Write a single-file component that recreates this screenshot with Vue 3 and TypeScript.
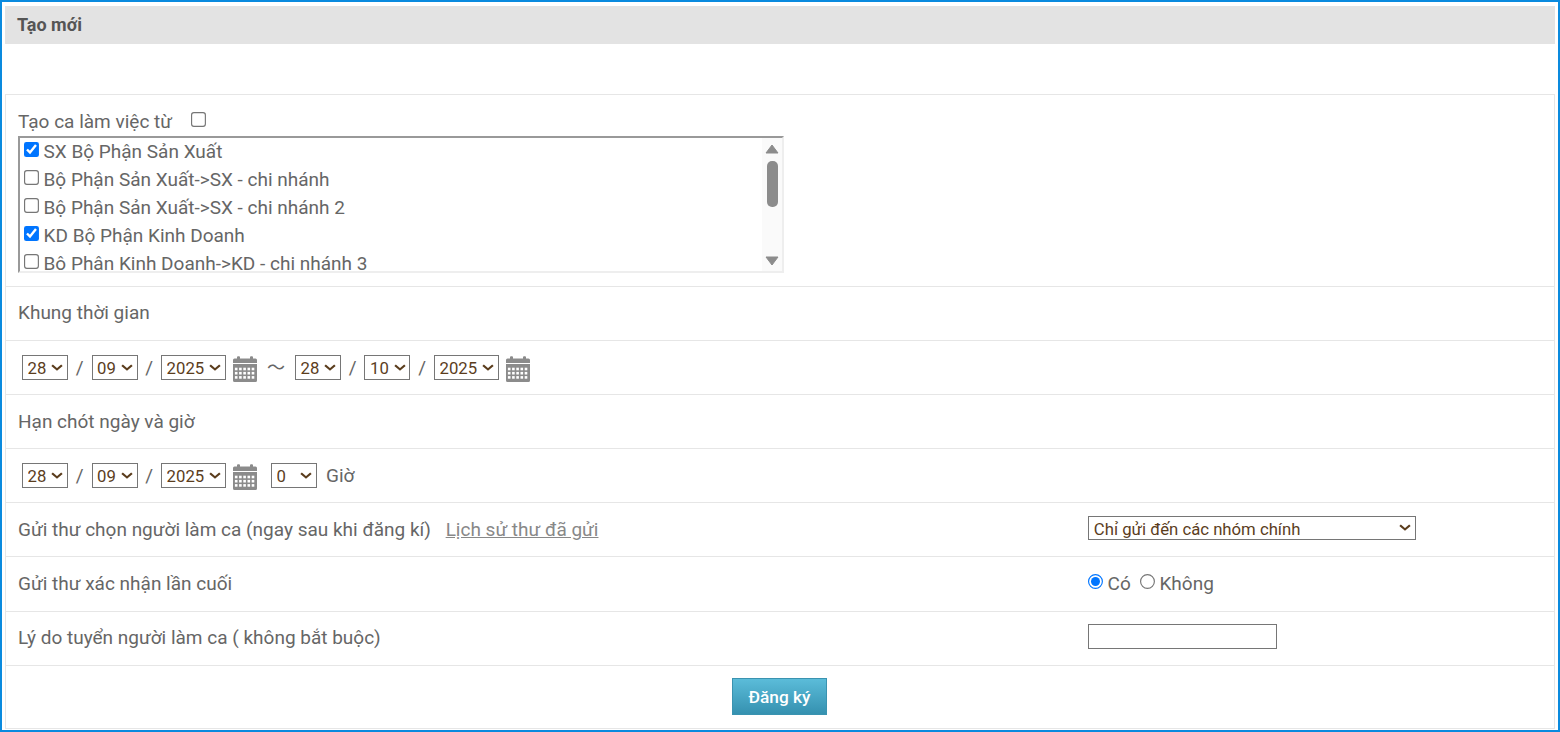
<script setup lang="ts">
interface Option { label: string; checked: boolean }
const departments: Option[] = [
  { label: 'SX Bộ Phận Sản Xuất', checked: true },
  { label: 'Bộ Phận Sản Xuất->SX - chi nhánh', checked: false },
  { label: 'Bộ Phận Sản Xuất->SX - chi nhánh 2', checked: false },
  { label: 'KD Bộ Phận Kinh Doanh', checked: true },
  { label: 'Bộ Phận Kinh Doanh->KD - chi nhánh 3', checked: false },
]
const calendarCells = Array.from({ length: 15 }, (_, i) => ({
  x: 1.9 + (i % 5) * 4.2,
  y: 11.7 + Math.floor(i / 5) * 4.2,
}))
</script>

<template>
  <div class="frame">
    <h2 class="title">Tạo mới</h2>
    <div class="spacer"></div>
    <div class="table">
      <div class="row row-list">
        <div class="from-line">
          <span>Tạo ca làm việc từ</span>
          <input type="checkbox" class="from-check" />
        </div>
        <div class="listbox">
          <div class="list-items">
            <label v-for="d in departments" :key="d.label" class="list-item">
              <input type="checkbox" :checked="d.checked" />
              <span>{{ d.label }}</span>
            </label>
          </div>
          <div class="scrollbar">
            <svg width="14" height="10" viewBox="0 0 14 10"><path d="M7 1 L13 9 H1 Z" fill="#8c8c8c" stroke="#8c8c8c" stroke-linejoin="round" /></svg>
            <div class="thumb"></div>
            <svg class="down" width="14" height="10" viewBox="0 0 14 10"><path d="M7 9 L13 1 H1 Z" fill="#8c8c8c" stroke="#8c8c8c" stroke-linejoin="round" /></svg>
          </div>
        </div>
      </div>

      <div class="row">Khung thời gian</div>

      <div class="row dates">
        <select class="sel"><option>28</option></select>
        <span class="slash">/</span>
        <select class="sel"><option>09</option></select>
        <span class="slash">/</span>
        <select class="sel year"><option>2025</option></select>
        <svg class="cal" width="24" height="26" viewBox="0 0 24 26">
          <path d="M0 4 Q0 2.5 1.5 2.5 H4 V1.2 Q4 .2 5 .2 H6 Q7 .2 7 1.2 V2.5 H17 V1.2 Q17 .2 18 .2 H19 Q20 .2 20 1.2 V2.5 H22.5 Q24 2.5 24 4 V7 H0 Z M0 8 H24 V24.5 Q24 26 22.5 26 H1.5 Q0 26 0 24.5 Z" fill="#8b8b8b" />
          <rect v-for="(c, i) in calendarCells" :key="i" :x="c.x" :y="c.y" width="2.6" height="2.6" fill="#fff" />
        </svg>
        <span class="tilde">～</span>
        <select class="sel"><option>28</option></select>
        <span class="slash">/</span>
        <select class="sel"><option>10</option></select>
        <span class="slash">/</span>
        <select class="sel year"><option>2025</option></select>
        <svg class="cal" width="24" height="26" viewBox="0 0 24 26">
          <path d="M0 4 Q0 2.5 1.5 2.5 H4 V1.2 Q4 .2 5 .2 H6 Q7 .2 7 1.2 V2.5 H17 V1.2 Q17 .2 18 .2 H19 Q20 .2 20 1.2 V2.5 H22.5 Q24 2.5 24 4 V7 H0 Z M0 8 H24 V24.5 Q24 26 22.5 26 H1.5 Q0 26 0 24.5 Z" fill="#8b8b8b" />
          <rect v-for="(c, i) in calendarCells" :key="i" :x="c.x" :y="c.y" width="2.6" height="2.6" fill="#fff" />
        </svg>
      </div>

      <div class="row low">Hạn chót ngày và giờ</div>

      <div class="row dates">
        <select class="sel"><option>28</option></select>
        <span class="slash">/</span>
        <select class="sel"><option>09</option></select>
        <span class="slash">/</span>
        <select class="sel year"><option>2025</option></select>
        <svg class="cal" width="24" height="26" viewBox="0 0 24 26">
          <path d="M0 4 Q0 2.5 1.5 2.5 H4 V1.2 Q4 .2 5 .2 H6 Q7 .2 7 1.2 V2.5 H17 V1.2 Q17 .2 18 .2 H19 Q20 .2 20 1.2 V2.5 H22.5 Q24 2.5 24 4 V7 H0 Z M0 8 H24 V24.5 Q24 26 22.5 26 H1.5 Q0 26 0 24.5 Z" fill="#8b8b8b" />
          <rect v-for="(c, i) in calendarCells" :key="i" :x="c.x" :y="c.y" width="2.6" height="2.6" fill="#fff" />
        </svg>
        <select class="sel hour"><option>0</option></select>
        <span class="hour-label">Giờ</span>
      </div>

      <div class="row split low">
        <div class="left">
          Gửi thư chọn người làm ca (ngay sau khi đăng kí)
          <a class="history" href="#">Lịch sử thư đã gửi</a>
        </div>
        <div class="right">
          <select class="sel wide"><option>Chỉ gửi đến các nhóm chính</option></select>
        </div>
      </div>

      <div class="row split row-55">
        <div class="left">Gửi thư xác nhận lần cuối</div>
        <div class="right radios">
          <input type="radio" name="confirm" checked />
          <span class="radio-text">Có</span>
          <input type="radio" name="confirm" class="radio-2" />
          <span class="radio-text">Không</span>
        </div>
      </div>

      <div class="row split">
        <div class="left">Lý do tuyển người làm ca ( không bắt buộc)</div>
        <div class="right"><input type="text" class="reason" /></div>
      </div>

      <div class="row actions">
        <button type="button" class="submit">Đăng ký</button>
      </div>
    </div>
  </div>
</template>

<style>
html, body { margin: 0; background: #fff; }
</style>

<style scoped>
.frame {
  box-sizing: border-box;
  width: 1560px;
  height: 732px;
  border: 2px solid #0a8ade;
  padding: 4px 3px 0;
  font-family: Roboto, "Liberation Sans", sans-serif;
  font-size: 19px;
  color: #666;
  overflow: hidden;
  background: #fff;
}
.title {
  margin: 0;
  height: 38px;
  line-height: 38px;
  padding-left: 12px;
  background: #e3e3e3;
  font-size: 18px;
  font-weight: 700;
  color: #555;
}
.spacer { height: 50px; }
.table {
  border-left: 1px solid #e6e6e6;
  border-right: 1px solid #e6e6e6;
  border-bottom: 1px solid #e6e6e6;
}
.row {
  box-sizing: border-box;
  height: 54px;
  border-top: 1px solid #e6e6e6;
  padding: 0 0 2px 12px;
  display: flex;
  align-items: center;
}
.row.low { padding-bottom: 0; }
.row-list {
  display: block;
  height: 192px;
  padding: 12px 0 0 12px;
}
.from-line {
  display: flex;
  align-items: center;
  height: 29px;
}
input[type="checkbox"], input[type="radio"] { zoom: 1.15; }
.from-check {
  margin: 0 0 4px 16.7px;
}
.listbox {
  box-sizing: border-box;
  width: 766px;
  height: 137px;
  border: 2px solid;
  border-color: #999 #eee #eee #999;
  display: flex;
  overflow: hidden;
}
.list-items { flex: 1; margin-top: -1px; }
.list-item {
  display: flex;
  align-items: center;
  height: 28px;
  padding-left: 4px;
}
.list-item input { margin: 0 4px 2px 0; }
.scrollbar {
  width: 20px;
  background: #fafafa;
  display: flex;
  flex-direction: column;
  align-items: center;
  padding-top: 6px;
}
.thumb {
  width: 11px;
  height: 46px;
  border-radius: 5px;
  background: #8c8c8c;
  margin-top: 7px;
}
.scrollbar .down { margin-top: 49px; }
.dates { padding: 0 0 0 16px; }
.sel {
  zoom: 1.15;
  appearance: none;
  -webkit-appearance: none;
  box-sizing: border-box;
  height: 20.9px;
  width: 40px;
  border: 1px solid #767676;
  border-radius: 0;
  background-color: #fff;
  background-image: url("data:image/svg+xml,%3Csvg xmlns='http://www.w3.org/2000/svg' width='11' height='7' viewBox='0 0 11 7'%3E%3Cpath d='M1 1.2 L5.5 5.5 L10 1.2' fill='none' stroke='%235b3d1d' stroke-width='2'/%3E%3C/svg%3E");
  background-repeat: no-repeat;
  background-position: right 3.6px center;
  background-size: 10px 6.4px;
  color: #5b3d1d;
  font-family: inherit;
  font-size: 14.55px;
  padding: 1px 0 0 4px;
}
.sel.year { width: 56.5px; }
.sel.hour { margin-left: 12.2px; }
.sel.wide { width: 285.2px; padding-left: 4.2px; display: block; margin-bottom: 2.6px; }
.slash { width: 23.5px; text-align: center; }
.cal { margin-left: 7px; margin-top: 2px; }
.tilde { width: 38px; text-align: center; font-family: "Noto Sans CJK JP", sans-serif; font-size: 18px; margin-bottom: 4px; }
.hour-label { margin-left: 9px; }
.split > .left { width: 1070px; flex: none; }
.left { white-space: nowrap; }
.history { margin-left: 10px; color: #888; text-decoration: underline; }
.row-55 { height: 55px; }
.radios { display: flex; align-items: center; }
.radios input { margin: 0 4px 3px 0; }
.radios .radio-2 { margin-left: 8px; margin-right: 4px; }
.reason {
  box-sizing: border-box;
  width: 189px;
  height: 25px;
  border: 1px solid #767676;
  padding: 0;
  display: block;
  margin-bottom: 3px;
}
.actions { justify-content: center; align-items: flex-start; height: 63px; padding: 12px 1px 0 0; }
.submit {
  box-sizing: border-box;
  width: 95px;
  height: 37px;
  border: 1px solid #3a93b0;
  background: linear-gradient(#5bbcd9, #3591b0);
  color: #fff;
  font-family: inherit;
  font-size: 17.25px;
  font-weight: 500;
  padding: 0;
}
</style>
